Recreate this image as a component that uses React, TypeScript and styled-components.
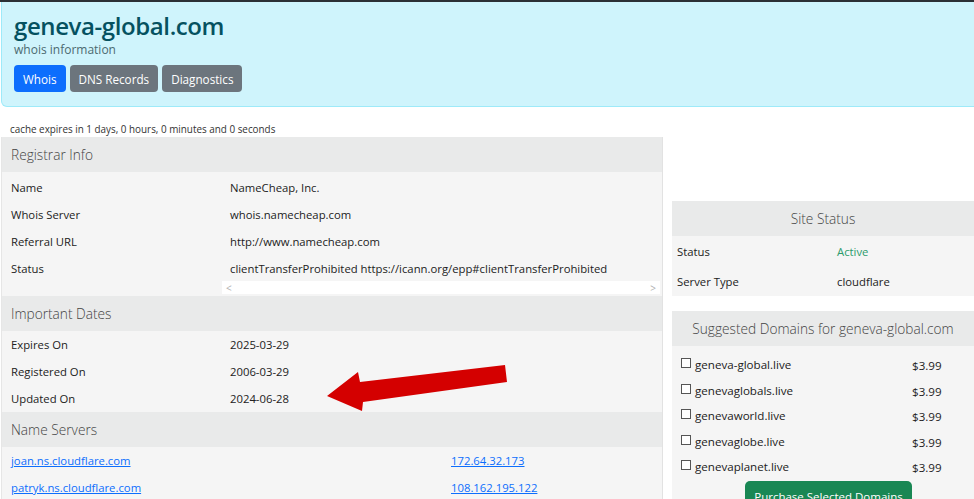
import React from "react"
import styled, { createGlobalStyle } from "styled-components"

const GlobalStyle = createGlobalStyle`
    html, body {
        margin: 0;
        padding: 0;
        background: #ffffff;
        overflow: hidden;
    }
    body {
        font-family: "Open Sans", "Noto Sans", sans-serif;
        color: #212529;
    }
`

const Page = styled.div`
    position: relative;
    width: 974px;
    height: 499px;
    overflow: hidden;
`

const TopLine = styled.div`
    height: 2px;
    background-color: #2b3035;
`

const Hero = styled.div`
    margin: 0 -12px 0 1px;
    padding: 10px 12px 12px 12px;
    height: 105px;
    box-sizing: border-box;
    background-color: #cff4fc;
    border: 1px solid #9eeaf9;
    border-top: 0;
    border-radius: 0 0 6px 6px;
`

const Title = styled.h1`
    margin: 0;
    font-size: 24px;
    font-weight: 600;
    line-height: 28px;
    color: #055160;
    letter-spacing: -0.4px;
`

const Subtitle = styled.div`
    margin-top: 2px;
    font-size: 12px;
    line-height: 16px;
    color: #4b6a70;
`

const ButtonRow = styled.div`
    display: flex;
    gap: 4px;
    margin-top: 7px;
`

const NavButton = styled.button<{ $active?: boolean }>`
    height: 27px;
    padding: 0 9px;
    border: 0;
    border-radius: 4px;
    font-family: inherit;
    font-size: 11.7px;
    color: #ffffff;
    background-color: ${(p) => (p.$active ? "#0d6efd" : "#6c757d")};
`

const CacheNote = styled.div`
    margin: 15px 0 0 10px;
    height: 15px;
    font-size: 9.9px;
    line-height: 15px;
    color: #333;
`

const Main = styled.div`
    display: grid;
    grid-template-columns: 662px 1fr;
    gap: 9px;
    padding-left: 1px;
`

const LeftCard = styled.div`
    background-color: #f5f5f5;
    border-left: 1px solid #e6e6e6;
    border-right: 1px solid #e2e2e2;
`

const SectionHeader = styled.div<{ $center?: boolean }>`
    height: 35px;
    display: flex;
    align-items: center;
    justify-content: ${(p) => (p.$center ? "center" : "flex-start")};
    padding-left: ${(p) => (p.$center ? "0" : "9px")};
    background-color: #e9eaea;
    font-size: 13.7px;
    font-weight: 300;
    color: #444;
`

const Body = styled.div<{ $top?: number }>`
    padding-top: ${(p) => p.$top || 0}px;
`

const Row = styled.div<{ $cols?: string; $h?: number; $pad?: number }>`
    display: grid;
    grid-template-columns: ${(p) => p.$cols || "219px 1fr"};
    align-items: center;
    height: ${(p) => p.$h || 27}px;
    padding-left: ${(p) => p.$pad ?? 9}px;
    font-size: 11.3px;
    color: #222;
    white-space: nowrap;
`

const Active = styled.span`
    color: #2c9b6c;
`

const Link = styled.a`
    color: #0d6efd;
    text-decoration: underline;
`

const ScrollTrack = styled.div`
    margin: -1px 2px 2px 220px;
    height: 13px;
    background-color: #ffffff;
    display: flex;
    justify-content: space-between;
    align-items: center;
    padding: 0 4px;
    font-size: 10px;
    color: #b0b0b0;
`

const RightCol = styled.div`
    padding-top: 64px;
    display: flex;
    flex-direction: column;
    gap: 15px;
`

const RightCard = styled.div`
    background-color: #f5f5f5;
`

const DomainList = styled.div`
    padding: 6px 0 0 9px;
`

const DomainRow = styled.div`
    display: grid;
    grid-template-columns: 231px 1fr;
    align-items: center;
    height: 25.5px;
    font-size: 11.6px;
    color: #222;
`

const DomainName = styled.label`
    display: flex;
    align-items: center;
    gap: 4px;
`

const Box = styled.span`
    width: 8px;
    height: 8px;
    border: 1px solid #555;
    background: #fff;
    margin-top: -3px;
`

const Price = styled.span`
    padding-top: 2px;
`

const PurchaseButton = styled.button`
    display: block;
    margin: 1px 0 0 73px;
    width: 167px;
    height: 32px;
    border: 0;
    border-radius: 5px;
    padding: 0;
    background-color: #198754;
    color: #fff;
    font-family: inherit;
    font-size: 11.5px;
    text-align: center;
    line-height: 28px;
`

const Arrow = styled.svg`
    position: absolute;
    left: 0;
    top: 0;
    pointer-events: none;
`

const registrar = [
    ["Name", "NameCheap, Inc."],
    ["Whois Server", "whois.namecheap.com"],
    ["Referral URL", "http://www.namecheap.com"],
    ["Status", "clientTransferProhibited https://icann.org/epp#clientTransferProhibited"],
]

const dates = [
    ["Expires On", "2025-03-29"],
    ["Registered On", "2006-03-29"],
    ["Updated On", "2024-06-28"],
]

const servers = [
    ["joan.ns.cloudflare.com", "172.64.32.173"],
    ["patryk.ns.cloudflare.com", "108.162.195.122"],
]

const domains = [
    "geneva-global.live",
    "genevaglobals.live",
    "genevaworld.live",
    "genevaglobe.live",
    "genevaplanet.live",
]

export default function App() {
    return (
        <Page>
            <GlobalStyle />
            <TopLine />
            <Hero>
                <Title>geneva-global.com</Title>
                <Subtitle>whois information</Subtitle>
                <ButtonRow>
                    <NavButton $active>Whois</NavButton>
                    <NavButton>DNS Records</NavButton>
                    <NavButton>Diagnostics</NavButton>
                </ButtonRow>
            </Hero>
            <CacheNote>cache expires in 1 days, 0 hours, 0 minutes and 0 seconds</CacheNote>
            <Main>
                <LeftCard>
                    <SectionHeader>Registrar Info</SectionHeader>
                    <Body $top={2}>
                        {registrar.map(([k, v]) => (
                            <Row key={k}>
                                <span>{k}</span>
                                <span>{v}</span>
                            </Row>
                        ))}
                        <ScrollTrack>
                            <span>&lt;</span>
                            <span>&gt;</span>
                        </ScrollTrack>
                    </Body>
                    <SectionHeader>Important Dates</SectionHeader>
                    <Body>
                        {dates.map(([k, v]) => (
                            <Row key={k}>
                                <span>{k}</span>
                                <span>{v}</span>
                            </Row>
                        ))}
                    </Body>
                    <SectionHeader>Name Servers</SectionHeader>
                    <Body>
                        {servers.map(([n, ip]) => (
                            <Row key={n} $cols="440px 1fr">
                                <Link href="#">{n}</Link>
                                <Link href="#">{ip}</Link>
                            </Row>
                        ))}
                    </Body>
                </LeftCard>
                <RightCol>
                    <RightCard>
                        <SectionHeader $center>Site Status</SectionHeader>
                        <Row $cols="160px 1fr" $h={30} $pad={5}>
                            <span>Status</span>
                            <Active>Active</Active>
                        </Row>
                        <Row $cols="160px 1fr" $h={30} $pad={5}>
                            <span>Server Type</span>
                            <span>cloudflare</span>
                        </Row>
                    </RightCard>
                    <RightCard>
                        <SectionHeader $center>Suggested Domains for geneva-global.com</SectionHeader>
                        <DomainList>
                            {domains.map((d) => (
                                <DomainRow key={d}>
                                    <DomainName>
                                        <Box />
                                        {d}
                                    </DomainName>
                                    <Price>$3.99</Price>
                                </DomainRow>
                            ))}
                        </DomainList>
                        <PurchaseButton>Purchase Selected Domains</PurchaseButton>
                    </RightCard>
                </RightCol>
            </Main>
            <Arrow width="974" height="499" viewBox="0 0 974 499">
                <polygon
                    points="505,365 507,382 363,402 362,411 327,396 358,372 360,382"
                    fill="#d40000"
                />
            </Arrow>
        </Page>
    )
}
